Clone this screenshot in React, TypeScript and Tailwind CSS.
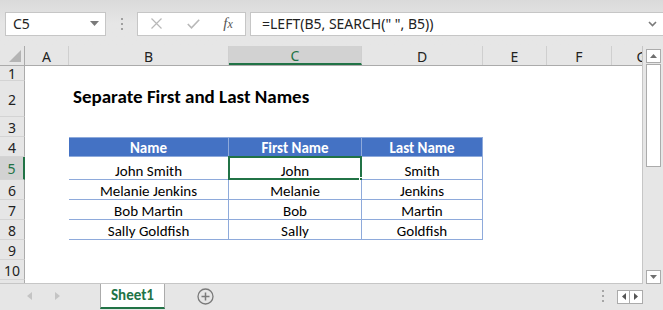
import React from "react";

const cellFont = { fontFamily: "Carlito, Calibri, Lato, 'Noto Sans', sans-serif" };
const uiFont = { fontFamily: "'Segoe UI', 'Noto Sans', 'Open Sans', sans-serif" };

type Cell = { text?: string; kind?: "title" | "th" | "td"; sel?: boolean };

const colDefs = [
  { k: "A", w: "w-[44px]" },
  { k: "B", w: "w-[160px]" },
  { k: "C", w: "w-[133px]" },
  { k: "D", w: "w-[121px]" },
  { k: "E", w: "w-[64px]" },
  { k: "F", w: "w-[65px]" },
  { k: "G", w: "w-[60px]" },
];

const rows: { n: string; h: string; cells: Record<string, Cell> }[] = [
  { n: "1", h: "h-[15px]", cells: {} },
  { n: "2", h: "h-[36px]", cells: { B: { text: "Separate First and Last Names", kind: "title" } } },
  { n: "3", h: "h-[20px]", cells: {} },
  {
    n: "4",
    h: "h-[20px]",
    cells: {
      B: { text: "Name", kind: "th" },
      C: { text: "First Name", kind: "th" },
      D: { text: "Last Name", kind: "th" },
    },
  },
  {
    n: "5",
    h: "h-[23px]",
    cells: {
      B: { text: "John Smith", kind: "td" },
      C: { text: "John", kind: "td", sel: true },
      D: { text: "Smith", kind: "td" },
    },
  },
  {
    n: "6",
    h: "h-[20px]",
    cells: {
      B: { text: "Melanie Jenkins", kind: "td" },
      C: { text: "Melanie", kind: "td" },
      D: { text: "Jenkins", kind: "td" },
    },
  },
  {
    n: "7",
    h: "h-[20px]",
    cells: {
      B: { text: "Bob Martin", kind: "td" },
      C: { text: "Bob", kind: "td" },
      D: { text: "Martin", kind: "td" },
    },
  },
  {
    n: "8",
    h: "h-[20px]",
    cells: {
      B: { text: "Sally Goldfish", kind: "td" },
      C: { text: "Sally", kind: "td" },
      D: { text: "Goldfish", kind: "td" },
    },
  },
  { n: "9", h: "h-[20px]", cells: {} },
  { n: "10", h: "h-[20px]", cells: {} },
  { n: "", h: "h-[20px]", cells: {} },
];

function CellView({ c, w, row }: { c?: Cell; w: string; row: string }) {
  if (!c) return <div className={`${w} shrink-0 h-full`} />;
  if (c.kind === "title") {
    return (
      <div className={`${w} shrink-0 h-full relative`}>
        <div
          className="absolute left-[4px] bottom-[11px] whitespace-nowrap text-[19px] leading-none font-bold text-black"
          style={cellFont}
        >
          {c.text}
        </div>
      </div>
    );
  }
  const th = c.kind === "th";
  const first = row === "4";
  return (
    <div
      className={`${w} shrink-0 h-full relative flex items-end justify-center pb-[0px] border-r border-b border-[#8eaadb] ${
        first ? "border-t" : ""
      } ${th ? "bg-[#4472c4] text-white font-bold" : "bg-white text-black"} text-[15px] leading-none`}
      style={cellFont}
    >
      <span>{c.text}</span>
      {c.sel && (
        <>
          <div className="absolute -left-[1px] -top-[1px] -right-[1px] -bottom-[1px] border-2 border-[#217346]" />
          <div className="absolute -right-[3px] -bottom-[3px] w-[5px] h-[5px] bg-[#217346] border border-white" />
        </>
      )}
    </div>
  );
}

export default function App() {
  return (
    <div className="w-[663px] h-[310px] bg-[#e6e6e6] flex flex-col overflow-hidden select-none">
      {/* Formula toolbar */}
      <div className="h-[46px] shrink-0 flex items-center bg-gradient-to-b from-[#dadada] via-[#e6e6e6] to-[#e6e6e6] pt-[1px]">
        <div className="ml-[5px] w-[101px] h-[24px] bg-white border border-[#c6c6c6] flex items-center justify-between pl-[7px] pr-[6px]">
          <span className="text-[14px] text-[#222]" style={uiFont}>
            C5
          </span>
          <svg width="9" height="5" viewBox="0 0 9 5">
            <path d="M0 0 L9 0 L4.5 5 Z" fill="#7a7a7a" />
          </svg>
        </div>
        <div className="w-[31px] flex flex-col items-center gap-[3px]">
          <div className="w-[2px] h-[2px] bg-[#a0a0a0]" />
          <div className="w-[2px] h-[2px] bg-[#a0a0a0]" />
          <div className="w-[2px] h-[2px] bg-[#a0a0a0]" />
        </div>
        <div className="w-[109px] h-[24px] bg-white border border-[#c6c6c6] flex items-center">
          <div className="w-[37px] flex justify-center">
            <svg width="11" height="11" viewBox="0 0 11 11">
              <path d="M0.5 0.5 L10.5 10.5 M10.5 0.5 L0.5 10.5" stroke="#b8b8b8" strokeWidth="1.2" />
            </svg>
          </div>
          <div className="w-[36px] flex justify-center">
            <svg width="13" height="10" viewBox="0 0 13 10">
              <path d="M0.8 5 L4.5 8.8 L12.2 0.8" stroke="#b8b8b8" strokeWidth="1.6" fill="none" />
            </svg>
          </div>
          <div className="w-[34px] flex justify-center">
            <span className="text-[15px] italic text-[#555] leading-none" style={{ fontFamily: "'Liberation Serif', 'DejaVu Serif', serif" }}>
              f<span className="text-[12px]">x</span>
            </span>
          </div>
        </div>
        <div className="ml-[4px] flex-1 h-[24px] bg-white border border-[#c6c6c6] border-r-0 flex items-center justify-between pl-[11px] pr-[6px]">
          <span className="text-[14px] text-[#222] whitespace-nowrap" style={uiFont}>
            =LEFT(B5, SEARCH(" ", B5))
          </span>
          <svg width="9" height="6" viewBox="0 0 9 6">
            <path d="M1 1 L4.5 4.5 L8 1" stroke="#7a7a7a" strokeWidth="1.6" fill="none" />
          </svg>
        </div>
      </div>

      {/* Sheet area */}
      <div className="h-[238px] shrink-0 flex">
        <div className="w-[643px] shrink-0 h-full flex flex-col bg-white border-r border-[#c6c6c6] border-b overflow-hidden">
          {/* Column headers */}
          <div className="h-[20px] shrink-0 flex bg-[#e6e6e6] border-b border-[#ababab]" style={uiFont}>
            <div className="w-[25px] shrink-0 h-full relative border-r border-[#ababab]">
              <svg className="absolute right-[3px] bottom-[3px]" width="12" height="12" viewBox="0 0 12 12">
                <path d="M12 0 L12 12 L0 12 Z" fill="#b4b4b4" />
              </svg>
            </div>
            {colDefs.map((c) => (
              <div
                key={c.k}
                className={`${c.w} shrink-0 h-full flex items-center justify-center text-[14px] border-r border-[#cfcfcf] ${
                  c.k === "C"
                    ? "bg-[#d2d2d2] text-[#217346] border-b-2 border-b-[#217346]"
                    : "text-[#222]"
                }`}
              >
                <span className="pt-[1px]">{c.k}</span>
              </div>
            ))}
          </div>
          {/* Rows */}
          {rows.map((r, i) => (
            <div key={i} className={`${r.h} shrink-0 flex`}>
              <div
                className={`w-[25px] shrink-0 h-full flex items-center justify-center text-[14px] border-b border-[#d4d4d4] ${
                  r.n === "5"
                    ? "bg-[#d2d2d2] text-[#217346] border-r-2 border-r-[#217346]"
                    : "bg-[#e6e6e6] text-[#222] border-r border-r-[#ababab]"
                }`}
                style={uiFont}
              >
                <span className="pt-[1px]">{r.n}</span>
              </div>
              {colDefs.map((c) => (
                <CellView key={c.k} c={r.cells[c.k]} w={c.w} row={r.n} />
              ))}
            </div>
          ))}
        </div>
        {/* Vertical scrollbar */}
        <div className="flex-1 h-full flex flex-col items-center pt-[3px] pb-[0px]">
          <div className="w-[15px] h-[14px] bg-white border border-[#ababab] flex items-center justify-center">
            <svg width="7" height="4" viewBox="0 0 7 4">
              <path d="M0 4 L3.5 0 L7 4 Z" fill="#6f6f6f" />
            </svg>
          </div>
          <div className="w-[15px] h-[103px] mt-[1px] bg-white border border-[#ababab]" />
          <div className="flex-1" />
          <div className="w-[15px] h-[14px] bg-white border border-[#ababab] flex items-center justify-center">
            <svg width="7" height="4" viewBox="0 0 7 4">
              <path d="M0 0 L7 0 L3.5 4 Z" fill="#6f6f6f" />
            </svg>
          </div>
        </div>
      </div>

      {/* Sheet tabs */}
      <div className="flex-1 flex items-start">
        <div className="w-[100px] h-[24px] flex items-center">
          <svg className="ml-[27px]" width="5" height="8" viewBox="0 0 5 8">
            <path d="M5 0 L5 8 L0 4 Z" fill="#c4c4c4" />
          </svg>
          <svg className="ml-[23px]" width="5" height="8" viewBox="0 0 5 8">
            <path d="M0 0 L0 8 L5 4 Z" fill="#c4c4c4" />
          </svg>
        </div>
        <div className="w-[65px] h-[25px] bg-white border-x border-[#ababab] border-b-2 border-b-[#217346] flex items-center justify-center">
          <span className="text-[15px] font-bold text-[#217346]" style={cellFont}>
            Sheet1
          </span>
        </div>
        <div className="ml-[32px] h-[24px] flex items-center">
          <svg width="17" height="17" viewBox="0 0 17 17">
            <circle cx="8.5" cy="8.5" r="7.5" stroke="#7a7a7a" strokeWidth="1.3" fill="none" />
            <path d="M8.5 4.5 V12.5 M4.5 8.5 H12.5" stroke="#7a7a7a" strokeWidth="1.5" />
          </svg>
        </div>
        <div className="flex-1" />
        <div className="h-[24px] flex items-center">
          <div className="flex flex-col gap-[3px] mr-[13px]">
            <div className="w-[2px] h-[2px] bg-[#a6a6a6]" />
            <div className="w-[2px] h-[2px] bg-[#a6a6a6]" />
            <div className="w-[2px] h-[2px] bg-[#a6a6a6]" />
          </div>
          <div className="flex h-[14px] mt-[1px] mr-[20px]">
            <div className="w-[13px] h-full bg-white border border-[#ababab] flex items-center justify-center">
              <svg width="4" height="7" viewBox="0 0 4 7">
                <path d="M4 0 L4 7 L0 3.5 Z" fill="#555" />
              </svg>
            </div>
            <div className="w-[13px] h-full bg-white border border-l-0 border-[#ababab] flex items-center justify-center">
              <svg width="4" height="7" viewBox="0 0 4 7">
                <path d="M0 0 L0 7 L4 3.5 Z" fill="#555" />
              </svg>
            </div>
          </div>
        </div>
      </div>
    </div>
  );
}
